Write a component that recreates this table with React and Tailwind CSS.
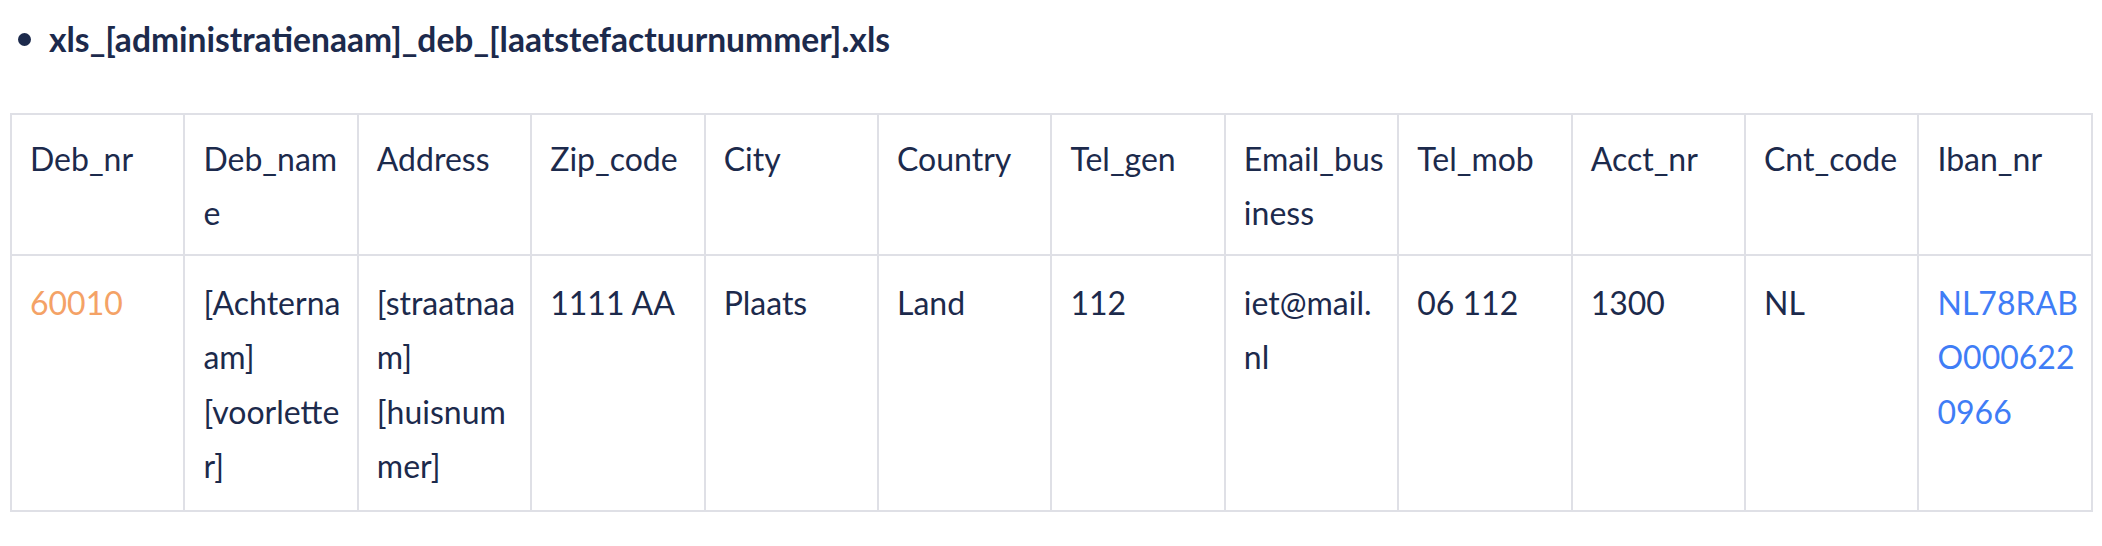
import React from "react";

const headers = [
  ["Deb_nr"],
  ["Deb_nam", "e"],
  ["Address"],
  ["Zip_code"],
  ["City"],
  ["Country"],
  ["Tel_gen"],
  ["Email_bus", "iness"],
  ["Tel_mob"],
  ["Acct_nr"],
  ["Cnt_code"],
  ["Iban_nr"],
];

const row = [
  { lines: ["60010"], cls: "text-[#f4a266]" },
  { lines: ["[Achterna", "am]", "[voorlette", "r]"] },
  { lines: ["[straatnaa", "m]", "[huisnum", "mer]"] },
  { lines: ["1111 AA"] },
  { lines: ["Plaats"] },
  { lines: ["Land"] },
  { lines: ["112"] },
  { lines: ["iet@mail.", "nl"] },
  { lines: ["06 112"] },
  { lines: ["1300"] },
  { lines: ["NL"] },
  { lines: ["NL78RAB", "O000622", "0966"], cls: "text-[#3f7df6]" },
];

function Lines({ lines }) {
  return lines.map((l, i) => (
    <span key={i} className="block whitespace-nowrap">
      {l}
    </span>
  ));
}

export default function App() {
  return (
    <div
      className="min-h-[546px] bg-white pl-[10px] pt-[12px] text-[#1c2a4c]"
      style={{ fontFamily: "Lato, 'Open Sans', sans-serif" }}
    >
      <div className="flex items-center text-[33.6px] font-bold leading-[54px]">
        <span className="ml-[8px] mr-[18px] h-[13px] w-[13px] rounded-full bg-[#1c2a4c]" />
        <span>xls_[administratienaam]_deb_[laatstefactuurnummer].xls</span>
      </div>
      <table className="mt-[47px] w-[2083px] table-fixed border-collapse text-[32px] leading-[54.4px]">
        <thead>
          <tr>
            {headers.map((h, i) => (
              <th
                key={i}
                className="border-2 border-[#dfe0e6] px-[18px] pb-[13px] pt-[17px] text-left align-top font-normal"
              >
                <Lines lines={h} />
              </th>
            ))}
          </tr>
        </thead>
        <tbody>
          <tr>
            {row.map((c, i) => (
              <td
                key={i}
                className={`border-2 border-[#dfe0e6] px-[18px] pb-[17px] pt-[20px] text-left align-top ${c.cls || ""}`}
              >
                <Lines lines={c.lines} />
              </td>
            ))}
          </tr>
        </tbody>
      </table>
    </div>
  );
}
